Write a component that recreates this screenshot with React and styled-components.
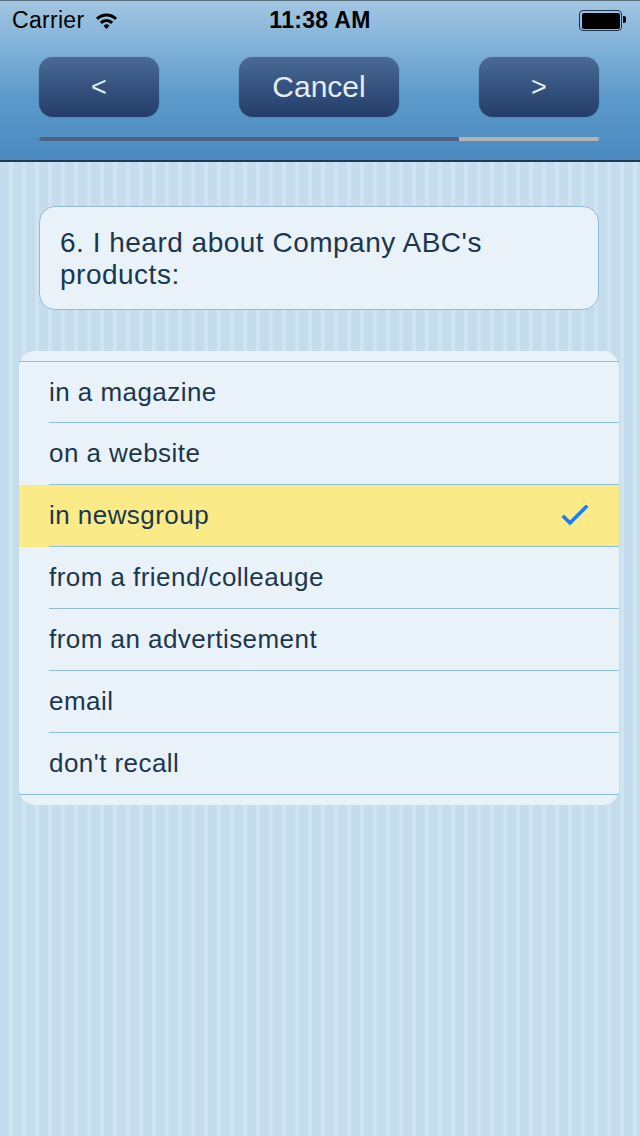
import React from 'react'
import styled, { createGlobalStyle } from 'styled-components'

const GlobalStyle = createGlobalStyle`
  html, body {
    margin: 0;
    padding: 0;
  }
  body {
    font-family: 'Liberation Sans', Arial, sans-serif;
    background-color: #c4dcec;
    background-image: repeating-linear-gradient(
      90deg,
      #c4dcec 0px,
      #c4dcec 9px,
      #cfe4f1 9px,
      #cfe4f1 13px
    );
  }
`

const Screen = styled.div`
  width: 640px;
  min-height: 1136px;
  display: flex;
  flex-direction: column;
`

const Header = styled.div`
  height: 159px;
  background: linear-gradient(#a3c6e2 0%, #7fb0d8 30%, #5d9acb 60%, #4a89c0 100%);
  border-top: 1px solid #5a6f80;
  border-bottom: 2px solid #1f3b55;
  display: flex;
  flex-direction: column;
`

const StatusBar = styled.div`
  height: 39px;
  display: flex;
  align-items: center;
  padding: 0 18px 0 12px;
  font-size: 23px;
  letter-spacing: 0.3px;
  color: #000;
  position: relative;
`

const Carrier = styled.div`
  display: flex;
  align-items: center;
  gap: 10px;
  flex: 1;
`

const Time = styled.div`
  font-weight: bold;
  position: absolute;
  left: 0;
  right: 0;
  text-align: center;
  pointer-events: none;
`

const Battery = styled.div`
  width: 38px;
  height: 16px;
  border: 1.5px solid #1e3550;
  border-radius: 4px;
  padding: 1.5px;
  position: relative;
  &::before {
    content: '';
    display: block;
    height: 100%;
    background: #000;
    border-radius: 2px;
  }
  &::after {
    content: '';
    position: absolute;
    right: -5px;
    top: 5px;
    width: 3px;
    height: 7px;
    background: #000;
    border-radius: 0 2px 2px 0;
  }
`

const NavRow = styled.div`
  display: flex;
  justify-content: space-between;
  padding: 0 41px 0 39px;
  margin-top: 17px;
`

const NavButton = styled.button`
  width: ${(p) => (p.wide ? '160px' : '120px')};
  height: 60px;
  border: none;
  border-radius: 14px;
  background: linear-gradient(#4b6a96 0%, #35527e 50%, #243e69 100%);
  box-shadow: 0 0 1px rgba(20, 40, 70, 0.5);
  color: #e4ecf4;
  font-family: 'Liberation Sans', Arial, sans-serif;
  font-size: ${(p) => (p.wide ? '30px' : '27px')};
  padding: 0;
  display: flex;
  align-items: center;
  justify-content: center;
`

const Progress = styled.div`
  margin: 20px 41px 0 39px;
  height: 4px;
  border-radius: 2px;
  background: #b3b3b3;
  overflow: hidden;
`

const ProgressFill = styled.div`
  height: 100%;
  background: #4b6282;
`

const Question = styled.div`
  margin: 44px 41px 0 39px;
  height: 104px;
  box-sizing: border-box;
  padding: 20px 60px 18px 20px;
  background: #eaf2f9;
  border: 1.5px solid #8fbde0;
  border-radius: 16px;
  color: #1b374e;
  font-size: 28px;
  letter-spacing: 0.5px;
  line-height: 32px;
`

const List = styled.div`
  margin: 41px 21px 0 19px;
  background: #eaf2f9;
  border-radius: 16px;
  padding: 10px 0;
  display: flex;
  flex-direction: column;
`

const Row = styled.div`
  height: ${(p) => (p.first ? '60px' : '61px')};
  display: flex;
  align-items: center;
  justify-content: space-between;
  padding: 0 30px 0 30px;
  background: ${(p) => (p.selected ? '#fbea88' : 'transparent')};
  color: #1b374e;
  font-size: 26px;
  letter-spacing: 0.45px;
  position: relative;
  border-bottom: 1px solid ${(p) => (p.last ? '#8fbde0' : 'transparent')};
  &::after {
    content: '';
    display: ${(p) => (p.last ? 'none' : 'block')};
    position: absolute;
    left: 30px;
    right: 0;
    bottom: -1px;
    height: 1px;
    background: #8fbde0;
  }
`

const TopLine = styled.div`
  height: 1px;
  background: #8fbde0;
`

const options = [
  'in a magazine',
  'on a website',
  'in newsgroup',
  'from a friend/colleauge',
  'from an advertisement',
  'email',
  "don't recall",
]

const Wifi = () => (
  <svg width="25" height="19" viewBox="0 0 22 18">
    <path d="M1 6.5 A14 14 0 0 1 21 6.5 L19 8.6 A11 11 0 0 0 3 8.6 Z" fill="#000" />
    <path d="M4.6 10.2 A9 9 0 0 1 17.4 10.2 L15.3 12.3 A6 6 0 0 0 6.7 12.3 Z" fill="#000" />
    <path d="M8.2 14 A4 4 0 0 1 13.8 14 L11 17 Z" fill="#000" />
  </svg>
)

const Check = () => (
  <svg width="28" height="22" viewBox="0 0 28 22">
    <polyline
      points="3,12 9,18 25,2"
      fill="none"
      stroke="#1a7ef2"
      strokeWidth="3.6"
      strokeLinecap="square"
    />
  </svg>
)

const App = () => {
  const selected = 2

  return (
    <>
      <GlobalStyle />
      <Screen>
        <Header>
          <StatusBar>
            <Carrier>
              Carrier <Wifi />
            </Carrier>
            <Time>11:38 AM</Time>
            <Battery />
          </StatusBar>
          <NavRow>
            <NavButton>&lt;</NavButton>
            <NavButton wide>Cancel</NavButton>
            <NavButton>&gt;</NavButton>
          </NavRow>
          <Progress>
            <ProgressFill style={{ width: `${(6 / 8) * 100}%` }} />
          </Progress>
        </Header>
        <Question>6. I heard about Company ABC's products:</Question>
        <List>
          <TopLine />
          {options.map((text, idx) => (
            <Row
              key={`option__${idx}`}
              first={idx === 0}
              selected={idx === selected}
              last={idx === options.length - 1}
            >
              {text}
              {idx === selected && <Check />}
            </Row>
          ))}
        </List>
      </Screen>
    </>
  )
}

export default App
